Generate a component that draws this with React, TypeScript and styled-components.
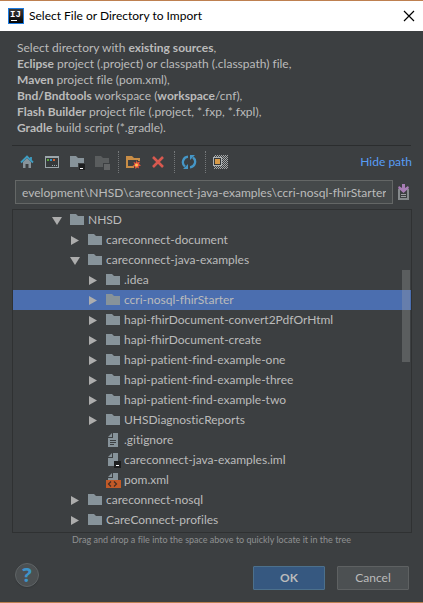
import React from "react";
import styled, { createGlobalStyle } from "styled-components";

const GlobalStyle = createGlobalStyle`
  *, *::before, *::after { box-sizing: border-box; }
  body {
    margin: 0;
    background: #2b2b2b;
    color: #bbbbbb;
    font: 12px/16px Lato, "Open Sans", sans-serif;
    font-variant-ligatures: none;
  }
  button, input { font: inherit; font-variant-ligatures: none; color: inherit; }
  svg { display: block; flex: none; }
`;

const Dialog = styled.main`
  display: flex;
  flex-direction: column;
  min-height: calc(100vh - 2px);
  background: #3c3f41;
  border-top: 1px solid #be8050;
  border-bottom: 1px solid #be8050;
`;

const TitleBar = styled.header`
  display: flex;
  align-items: center;
  gap: 5px;
  height: 30px;
  padding: 0 6px 0 8px;
  background: #ffffff;
  color: #000000;
`;

const Title = styled.h1`
  flex: 1;
  margin: 0;
  font-size: 12px;
  font-weight: 400;
  white-space: nowrap;
`;

const IconButton = styled.button`
  display: grid;
  place-items: center;
  flex: none;
  width: 16px;
  height: 16px;
  padding: 0;
  border: 0;
  background: none;
`;

const Description = styled.p`
  margin: 9px 12px 0;
  padding: 0 5px 9px;
  border-bottom: 1px solid #2b2d2e;
  white-space: nowrap;
`;

const Toolbar = styled.div`
  display: flex;
  align-items: center;
  gap: 9px;
  height: 34px;
  padding: 0 11px 2px 19px;
`;

const ToolGroup = styled.div`
  display: flex;
  gap: 9px;

  & + & {
    margin-left: -1px;
    padding: 3px 0 3px 6px;
    border-left: 1px dotted #75787a;
  }
`;

const PathLink = styled.a`
  margin-left: auto;
  color: #589df6;
  text-decoration: none;
  white-space: nowrap;
`;

const PathRow = styled.div`
  display: flex;
  align-items: center;
  gap: 2px;
  padding: 0 12px 0 15px;
`;

const PathInput = styled.input`
  flex: 1;
  min-width: 0;
  height: 24px;
  padding: 0 6px;
  border: 1px solid #646766;
  background: #45494a;
  outline: 0;
`;

const TreePanel = styled.section`
  position: relative;
  flex: 1;
  margin: 5px 11px 0 12px;
  border: 1px solid #2f3132;
`;

const TreeList = styled.ul`
  margin: 0;
  padding: 0 0 2px;
  list-style: none;
`;

const TreeRow = styled.li<{ $level: number; $selected: boolean }>`
  display: flex;
  align-items: center;
  height: 20px;
  padding-left: ${(p) => 36 + p.$level * 18}px;
  background: ${(p) => (p.$selected ? "#4b6eaf" : "transparent")};
  white-space: nowrap;
`;

const ArrowSlot = styled.span`
  width: 16px;
  height: 16px;
  margin-right: 4px;
`;

const RowLabel = styled.span`
  margin-left: 3px;
`;

const ScrollThumb = styled.div`
  position: absolute;
  top: 60px;
  right: 1px;
  width: 8px;
  height: 92px;
  background: rgba(166, 166, 166, 0.3);
`;

const Hint = styled.p`
  margin: 0;
  padding: 0 11px;
  color: #8f9192;
  font-size: 9px;
  line-height: 14px;
  text-align: center;
  white-space: nowrap;
`;

const Footer = styled.footer`
  display: flex;
  align-items: center;
  gap: 12px;
  padding: 16px 14px 10px 15px;
`;

const HelpButton = styled.button`
  width: 24px;
  height: 24px;
  margin-right: auto;
  margin-bottom: 5px;
  padding: 0;
  border: 1px solid #5f6466;
  border-radius: 50%;
  background: #4c5052;
  color: #3d94c9;
  font-family: "Open Sans", sans-serif;
  font-size: 20px;
  font-weight: 700;
  line-height: 22px;
  box-shadow: 0 1px 1px #35383a;
`;

const ActionButton = styled.button<{ $primary?: boolean }>`
  width: 72px;
  height: 24px;
  padding: 0;
  border: 1px solid ${(p) => (p.$primary ? "#4c708c" : "#5e6162")};
  border-radius: 1px;
  background: ${(p) => (p.$primary ? "#365880" : "#4c5052")};
  font-weight: ${(p) => (p.$primary ? 700 : 400)};
`;

const Icon = ({ children }: { children: React.ReactNode }) => (
  <svg width="16" height="16" viewBox="0 0 16 16" aria-hidden="true">
    {children}
  </svg>
);

const FOLDER = "M1 2h6l2 2h6v9H1z";
const PAGE_FOLD = "M7 1v4H3z";

const AppLogo = () => (
  <Icon>
    <defs>
      <linearGradient id="logo" x1="0" y1="0" x2="0" y2="1">
        <stop offset="0" stopColor="#3a3a3a" />
        <stop offset="1" stopColor="#050505" />
      </linearGradient>
    </defs>
    <rect width="16" height="16" fill="#1c7be0" />
    <rect x="1" y="1" width="14" height="14" fill="url(#logo)" />
    <text x="2" y="9" fill="#fff" fontFamily="Liberation Mono, monospace" fontSize="9" fontWeight="700">IJ</text>
    <path d="M3 12h6v1H3z" fill="#fff" />
  </Icon>
);

const CloseIcon = () => (
  <Icon><path d="M3 3l10 10m0-10L3 13" stroke="#000" strokeWidth="1.2" /></Icon>
);

const HomeIcon = () => (
  <Icon>
    <path d="M4 8l4-4 4 4v6H9.500v-4h-3v4H4z" fill="#87939a" />
    <path d="M2 8.500l6-6 6 6M12 3v3.500" fill="none" stroke="#3e9cc0" strokeWidth="1.800" />
  </Icon>
);

const ProjectIcon = () => (
  <Icon>
    <path d="M1 2h14v12H1z" fill="#9ba5aa" />
    <path d="M2 4h12v9H2z" fill="#35393b" />
    <path d="M3 5h2v2H3z" fill="#59a83c" />
    <path d="M6 5h2v2H6z" fill="#3592c4" />
    <path d="M9 5h2v2H9z" fill="#d06030" />
    <path d="M8 11h1v1H8zM10 11h1v1h-1zM12 11h1v1h-1z" fill="#9ba5aa" />
  </Icon>
);

const ModuleIcon = ({ disabled = false }: { disabled?: boolean }) => (
  <Icon>
    <path d="M1 2h6l2 2h6v5H9v4H1z" fill={disabled ? "#5a5d5e" : "#87939a"} />
    <path d="M10 10h6v6h-6z" fill={disabled ? "#626465" : "#1e1f20"} />
    {!disabled && <path d="M11 14h3v1h-3z" fill="#fff" />}
  </Icon>
);

const NewFolderIcon = () => (
  <Icon>
    <path d="M1 2h6l2 2h6v3h-2V6H3v6h6v2H1z" fill="#c88d46" />
    <path d="M11.500 6l1 2.500 2.500-1-1 2.500 2 1.500-2.500.7.5 2.300-2-1-1.500 1.500-.5-2.500-2.500-.5 2-1.500-1-2.500 2.500 1z" fill="#ed5740" />
    <circle cx="11.500" cy="11" r="1.500" fill="#ffc451" />
  </Icon>
);

const DeleteIcon = () => (
  <Icon><path d="M3 3l10 10M13 3L3 13" stroke="#d8594f" strokeWidth="2.600" /></Icon>
);

const RefreshIcon = () => (
  <Icon>
    <path d="M7 2.700A5.500 5.500 0 0 0 4 12.500M9 13.300A5.500 5.500 0 0 0 12 3.500" fill="none" stroke="#4596c6" strokeWidth="2.300" />
    <path d="M2 15h5v-5zM14 1H9v5z" fill="#4596c6" />
  </Icon>
);

const HiddenIcon = () => (
  <Icon>
    <defs>
      <pattern id="checks" width="2" height="2" patternUnits="userSpaceOnUse">
        <path d="M0 0h1v1H0zM1 1h1v1H1z" fill="#a4a7a8" />
      </pattern>
    </defs>
    <path d="M2 1h14v14H2z" fill="url(#checks)" />
    <path d="M1 3h9v9H1z" fill="#aeb3b5" />
    <path d="M2 4h7v7H2z" fill="#343739" />
    <path d="M3 5h5v5H3z" fill="#d69a48" />
  </Icon>
);

const HistoryIcon = () => (
  <Icon>
    <path d="M3 5h2v4h7V5h2v11H3z" fill="#858a8c" />
    <path d="M5 8h7v6H5z" fill="#3c3f41" />
    <path d="M6 10h5v1H6zM6 12h5v1H6z" fill="#9a9da0" />
    <path d="M7 0h3v4l3-2 1 2-5.500 5L3 4l1-2 3 2z" fill="#a77db5" />
  </Icon>
);

const ArrowIcon = ({ open }: { open: boolean }) => (
  <Icon><path d={open ? "M3 5h10l-5 8z" : "M4 4v9l8-4.500z"} fill="#adadad" /></Icon>
);

type Kind = "folder" | "text" | "iml" | "xml";

const FileIcon = ({ kind }: { kind: Kind }) => {
  if (kind === "folder") {
    return <Icon><path d={FOLDER} fill="#87939a" /></Icon>;
  }
  return (
    <Icon>
      <path d={PAGE_FOLD} fill="#87939a" />
      <path d={kind === "text" ? "M8 1h5v14H3V6h5z" : "M8 1h5v13H3V6h5z"} fill="#87939a" />
      {kind === "text" && <path d="M5 8h6v1H5zM5 10h6v1H5zM5 12h4v1H5z" fill="#3c3f41" />}
      {kind === "iml" && (
        <>
          <path d="M9 9h7v7H9z" fill="#1e1f20" />
          <path d="M11 13h3v1h-3z" fill="#fff" />
        </>
      )}
      {kind === "xml" && (
        <>
          <path d="M1 8h15v8H1z" fill="#c25a28" />
          <path d="M6 9.500L3.500 12 6 14.500M9 9.500l2.500 2.500L9 14.500" fill="none" stroke="#432d23" strokeWidth="1.200" />
        </>
      )}
    </Icon>
  );
};

interface Entry {
  name: string;
  level: number;
  kind?: Kind;
  open?: boolean;
  selected?: boolean;
}

const entries: Entry[] = [
  { name: "NHSD", level: 0, open: true },
  { name: "careconnect-document", level: 1 },
  { name: "careconnect-java-examples", level: 1, open: true },
  { name: ".idea", level: 2 },
  { name: "ccri-nosql-fhirStarter", level: 2, selected: true },
  { name: "hapi-fhirDocument-convert2PdfOrHtml", level: 2 },
  { name: "hapi-fhirDocument-create", level: 2 },
  { name: "hapi-patient-find-example-one", level: 2 },
  { name: "hapi-patient-find-example-three", level: 2 },
  { name: "hapi-patient-find-example-two", level: 2 },
  { name: "UHSDiagnosticReports", level: 2 },
  { name: ".gitignore", level: 2, kind: "text" },
  { name: "careconnect-java-examples.iml", level: 2, kind: "iml" },
  { name: "pom.xml", level: 2, kind: "xml" },
  { name: "careconnect-nosql", level: 1 },
  { name: "CareConnect-profiles", level: 1 },
];

export default function App() {
  return (
    <>
      <GlobalStyle />
      <Dialog>
        <TitleBar>
          <AppLogo />
          <Title>Select File or Directory to Import</Title>
          <IconButton aria-label="Close"><CloseIcon /></IconButton>
        </TitleBar>
        <Description>
          Select directory with <b>existing sources</b>,<br />
          <b>Eclipse</b> project (.project) or classpath (.classpath) file,<br />
          <b>Maven</b> project file (pom.xml),<br />
          <b>Bnd/Bndtools</b> workspace (<b>workspace</b>/cnf),<br />
          <b>Flash Builder</b> project file (.project, *.fxp, *.fxpl),<br />
          <b>Gradle</b> build script (*.gradle).
        </Description>
        <Toolbar>
          <ToolGroup>
            <IconButton aria-label="Home"><HomeIcon /></IconButton>
            <IconButton aria-label="Project directory"><ProjectIcon /></IconButton>
            <IconButton aria-label="Module directory"><ModuleIcon /></IconButton>
            <IconButton aria-label="Module content root" disabled><ModuleIcon disabled /></IconButton>
          </ToolGroup>
          <ToolGroup>
            <IconButton aria-label="New folder"><NewFolderIcon /></IconButton>
            <IconButton aria-label="Delete"><DeleteIcon /></IconButton>
          </ToolGroup>
          <ToolGroup>
            <IconButton aria-label="Refresh"><RefreshIcon /></IconButton>
          </ToolGroup>
          <ToolGroup>
            <IconButton aria-label="Show hidden files"><HiddenIcon /></IconButton>
          </ToolGroup>
          <PathLink href="#path">Hide path</PathLink>
        </Toolbar>
        <PathRow>
          <PathInput
            id="path"
            type="text"
            aria-label="Path"
            defaultValue={"evelopment\\NHSD\\careconnect-java-examples\\ccri-nosql-fhirStarter"}
          />
          <IconButton aria-label="Path history"><HistoryIcon /></IconButton>
        </PathRow>
        <TreePanel>
          <TreeList role="tree" aria-label="Files">
            {entries.map(({ name, level, kind = "folder", open = false, selected = false }) => (
              <TreeRow
                key={name}
                role="treeitem"
                aria-level={level + 1}
                aria-selected={selected}
                aria-expanded={kind === "folder" ? open : undefined}
                $level={level}
                $selected={selected}
              >
                <ArrowSlot>{kind === "folder" && <ArrowIcon open={open} />}</ArrowSlot>
                <FileIcon kind={kind} />
                <RowLabel>{name}</RowLabel>
              </TreeRow>
            ))}
          </TreeList>
          <ScrollThumb />
        </TreePanel>
        <Hint>Drag and drop a file into the space above to quickly locate it in the tree</Hint>
        <Footer>
          <HelpButton aria-label="Help">?</HelpButton>
          <ActionButton $primary>OK</ActionButton>
          <ActionButton>Cancel</ActionButton>
        </Footer>
      </Dialog>
    </>
  );
}
